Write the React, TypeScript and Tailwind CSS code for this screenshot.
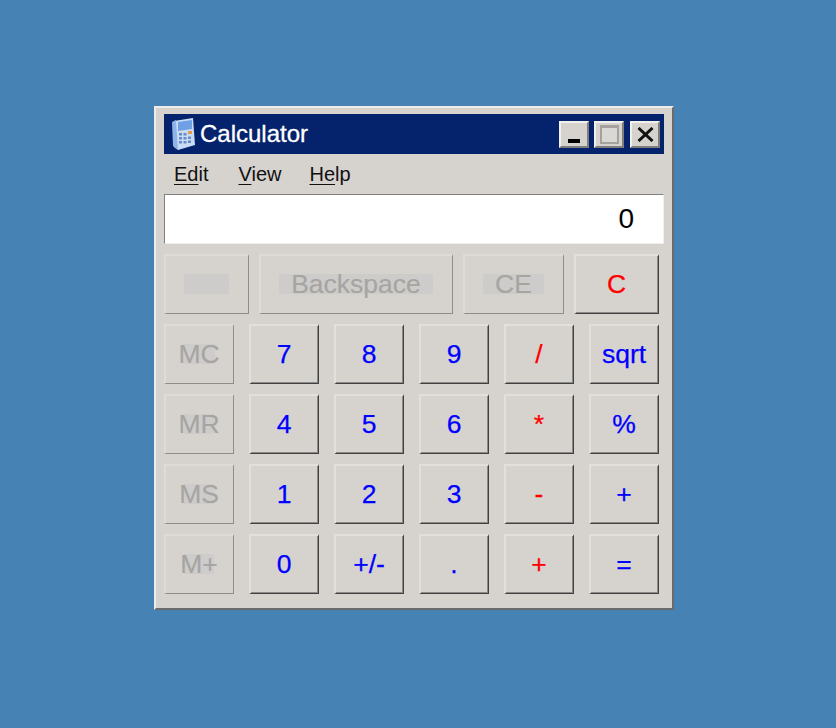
const SANS = "font-['Liberation_Sans',Arial,sans-serif]";

function Btn({ w, label, color, disabled, patch }: { w: string; label: string; color?: string; disabled?: boolean; patch?: string }) {
  const border = disabled
    ? "border-t-[#dedcd9] border-l-[#dedcd9] border-r-[#8f8d89] border-b-[#8f8d89]"
    : "border-t-[#e2e0dd] border-l-[#e2e0dd] border-r-[#404040] border-b-[#404040] shadow-[inset_-1px_-1px_0_#8c8a86]";
  return (
    <div className={`${w} h-[60px] shrink-0 flex items-center justify-center bg-[#d6d3ce] border-t-2 border-l-2 border-r border-b pr-px pb-px ${border} text-[26.5px] leading-none ${disabled ? "[-webkit-text-stroke:0.15px_currentColor]" : "[-webkit-text-stroke:0.25px_currentColor]"} ${color ?? ""}`}>
      {patch ? <span className={`${patch} h-5 flex items-center justify-center bg-[#cdccca]`}><span className="whitespace-nowrap">{label}</span></span> : label}
    </div>
  );
}

const rows: [string, string, string, string, string, string, string][] = [
  ["MC", "7", "8", "9", "/", "sqrt", "w-[32px]"],
  ["MR", "4", "5", "6", "*", "%", "w-[30px]"],
  ["MS", "1", "2", "3", "-", "+", "w-[30px]"],
  ["M+", "0", "+/-", ".", "+", "=", "w-[30px]"],
];

function Menu({ first, rest, className }: { first: string; rest: string; className?: string }) {
  return <span className={className}><span className="underline underline-offset-[3px] decoration-1">{first}</span>{rest}</span>;
}

const tb = "h-[27px] w-[30px] bg-[#d6d3ce] border-2 border-t-[#f2f0ed] border-l-[#f2f0ed] border-r-[#807e7a] border-b-[#807e7a] flex";

export default function App() {
  return (
    <div className={`w-[836px] h-[728px] bg-[#4682b4] flex items-start pl-[154px] pt-[106px] ${SANS}`}>
      <div className="w-[520px] h-[504px] bg-[#d6d3ce] border-2 border-t-[#eeece9] border-l-[#eeece9] border-r-[#6b6b6b] border-b-[#6b6b6b] pt-[6px] pl-[8px] pr-[8px]">
        <div className="h-10 w-[500px] bg-[#05226c] flex items-center pl-[7px] pr-[4px]">
          <svg width="26" height="34" viewBox="0 0 26 34" className="shrink-0 blur-[0.4px]">
            <path d="M3 4 L22 1 L24 28 L7 33 L3 30 Z" fill="#c9dcf5" />
            <path d="M7 5 L21 3 L21 12 L7 14 Z" fill="#6f9fe4" />
            <path d="M1 5 L5 3 L7 33 L2 29 Z" fill="#8fb3e8" />
            <rect x="17" y="14" width="4" height="3" fill="#e89a4a" />
            <g fill="#6a8cc4">
              <rect x="8" y="16" width="3" height="2.5" /><rect x="12.5" y="16" width="3" height="2.5" />
              <rect x="8" y="20" width="3" height="2.5" /><rect x="12.5" y="20" width="3" height="2.5" /><rect x="17" y="19.5" width="3" height="2.5" />
              <rect x="8" y="24" width="3" height="2.5" /><rect x="12.5" y="24" width="3" height="2.5" /><rect x="17" y="23.5" width="3" height="2.5" />
            </g>
          </svg>
          <span className="ml-[3px] text-[24px] leading-none text-white [-webkit-text-stroke:0.3px_currentColor]">Calculator</span>
          <div className="ml-auto flex items-center">
            <div className={`${tb} items-end justify-center pb-[3px]`}>
              <div className="w-[12px] h-[4px] bg-black" />
            </div>
            <div className={`${tb} ml-[5px] items-center justify-center`}>
              <div className="w-[19px] h-[19px] border-2 border-[#a5a29d] border-t-[3px] bg-[#dad8d4]" />
            </div>
            <div className={`${tb} ml-[6px] items-center justify-center`}>
              <svg width="17" height="15" viewBox="0 0 17 15"><path d="M1.5 1 L15.5 14 M15.5 1 L1.5 14" stroke="#111" strokeWidth="3" /></svg>
            </div>
          </div>
        </div>
        <div className="h-10 flex items-center pl-[10px] gap-[30px] text-[20px] leading-none text-[#111]">
          <Menu first="Ed" rest="it" />
          <Menu first="V" rest="iew" className="-mr-[2px]" />
          <Menu first="He" rest="lp" />
        </div>
        <div className="h-[50px] w-[500px] bg-white border border-t-[#808080] border-l-[#808080] border-r-[#f0efec] border-b-[#f0efec] flex items-center justify-end pr-[29px] text-[28px] leading-none text-black">0</div>
        <div className="mt-[10px] flex gap-[10px]">
          <Btn w="w-[85px]" label="" disabled patch="w-[45px]" />
          <Btn w="w-[194px]" label="Backspace" disabled color="text-[#a6a5a2]" patch="w-[154px]" />
          <Btn w="w-[101px]" label="CE" disabled color="text-[#a6a5a2]" patch="w-[61px]" />
          <Btn w="w-[85px]" label="C" color="text-[#ff0000]" />
        </div>
        {rows.map((r) => (
          <div key={r[0]} className="mt-[10px] flex gap-[15px]">
            <Btn w="w-[70px]" label={r[0]} disabled color="text-[#a6a5a2]" patch={r[6]} />
            {r.slice(1, 6).map((l, i) => (
              <Btn key={i} w="w-[70px]" label={l} color={i === 3 ? "text-[#ff0000]" : "text-[#0000ff]"} />
            ))}
          </div>
        ))}
      </div>
    </div>
  );
}
